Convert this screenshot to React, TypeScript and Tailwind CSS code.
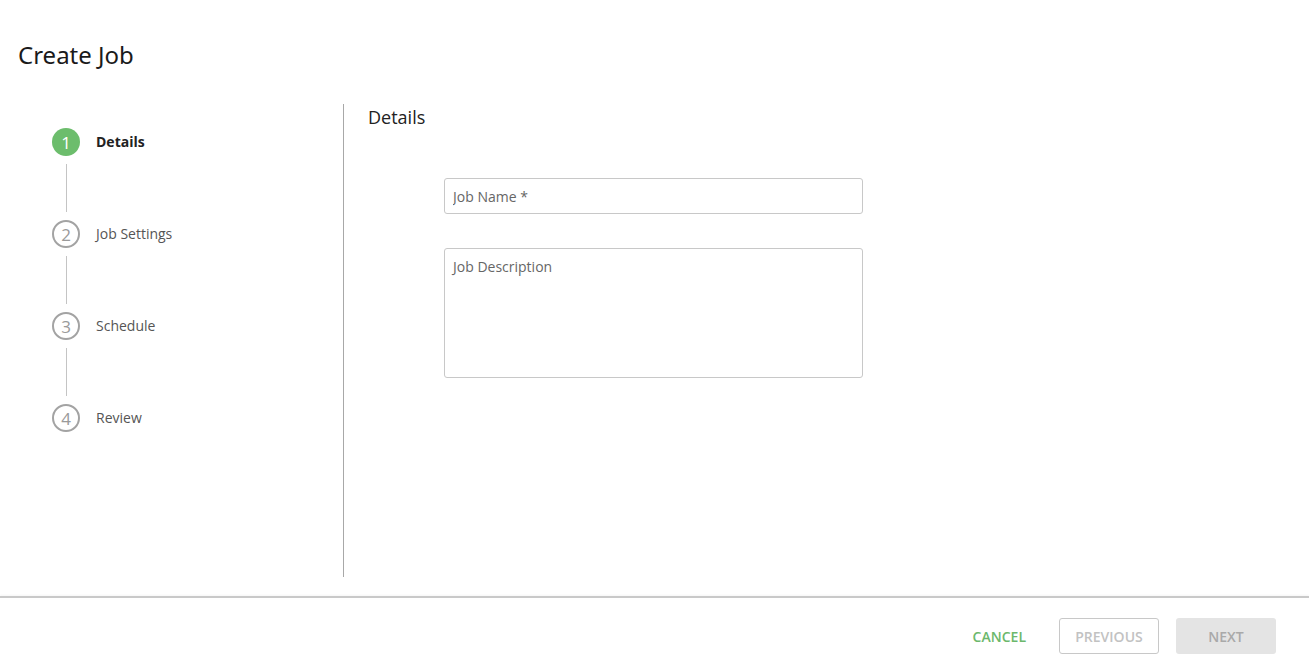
import React from "react";

const steps = [
  { n: 1, label: "Details", active: true },
  { n: 2, label: "Job Settings", active: false },
  { n: 3, label: "Schedule", active: false },
  { n: 4, label: "Review", active: false },
];

function Stepper() {
  return (
    <div className="pl-[52px] pt-[24px]">
      {steps.map((s, i) => (
        <div key={s.n}>
          <div className="flex items-center gap-4">
            {s.active ? (
              <div className="w-[28px] h-[28px] rounded-full bg-[#6cbd6c] text-white flex items-center justify-center text-[17px] leading-none">
                {s.n}
              </div>
            ) : (
              <div className="w-[28px] h-[28px] rounded-full border-2 border-[#a3a3a3] text-[#9a9a9a] flex items-center justify-center text-[17px] leading-none">
                {s.n}
              </div>
            )}
            <span
              className={
                s.active
                  ? "text-[14px] leading-5 -mt-[1px] font-bold text-[#222]"
                  : "text-[14px] leading-5 -mt-[1px] text-[#555]"
              }
            >
              {s.label}
            </span>
          </div>
          {i < steps.length - 1 && (
            <div className="ml-[14px] w-px h-[48px] my-2 bg-[#c4c4c4]" />
          )}
        </div>
      ))}
    </div>
  );
}

export default function App() {
  return (
    <div
      className="h-[670px] w-full flex flex-col bg-white text-[#333]"
      style={{ fontFamily: '"Open Sans", "Noto Sans", sans-serif' }}
    >
      <header className="pt-[40px] pb-[34px] pl-[18px]">
        <h1
          className="text-[24px] leading-[30px] text-[#1a1a1a]"
          style={{ fontFamily: '"Noto Sans", sans-serif' }}
        >
          Create Job
        </h1>
      </header>

      <main className="flex-1 flex pb-[19px] min-h-0">
        <aside className="w-[344px] border-r border-[#a8a8a8]">
          <Stepper />
        </aside>
        <section className="flex-1 pl-[24px]">
          <h2 className="text-[18px] leading-[26px] text-[#222]">Details</h2>
          <div className="ml-[76px] mt-[48px] w-[419px] flex flex-col gap-[34px]">
            <input
              className="h-[36px] w-full rounded-[3px] border border-[#c8c8c8] px-2 text-[14px] text-[#333] placeholder:text-[#666] outline-none"
              placeholder="Job Name *"
            />
            <textarea
              className="h-[130px] w-full rounded-[3px] border border-[#c8c8c8] px-2 pt-2 text-[14px] leading-5 text-[#333] placeholder:text-[#666] outline-none resize-none"
              placeholder="Job Description"
            />
          </div>
        </section>
      </main>

      <footer className="h-[74px] border-t-2 border-[#c9c9c9] shadow-[0_-1px_2px_rgba(0,0,0,0.04)] flex items-start justify-end pt-[20px] pr-[33px] gap-[17px]">
        <button className="h-[36px] px-4 text-[14px] font-semibold text-[#6cb86c]">
          CANCEL
        </button>
        <button className="h-[36px] w-[100px] rounded-[3px] border border-[#c8c8c8] text-[14px] font-semibold text-[#c2c2c2] bg-white">
          PREVIOUS
        </button>
        <button className="h-[36px] w-[100px] rounded-[3px] bg-[#e4e4e4] text-[14px] font-semibold text-[#a9a9a9]">
          NEXT
        </button>
      </footer>
    </div>
  );
}
